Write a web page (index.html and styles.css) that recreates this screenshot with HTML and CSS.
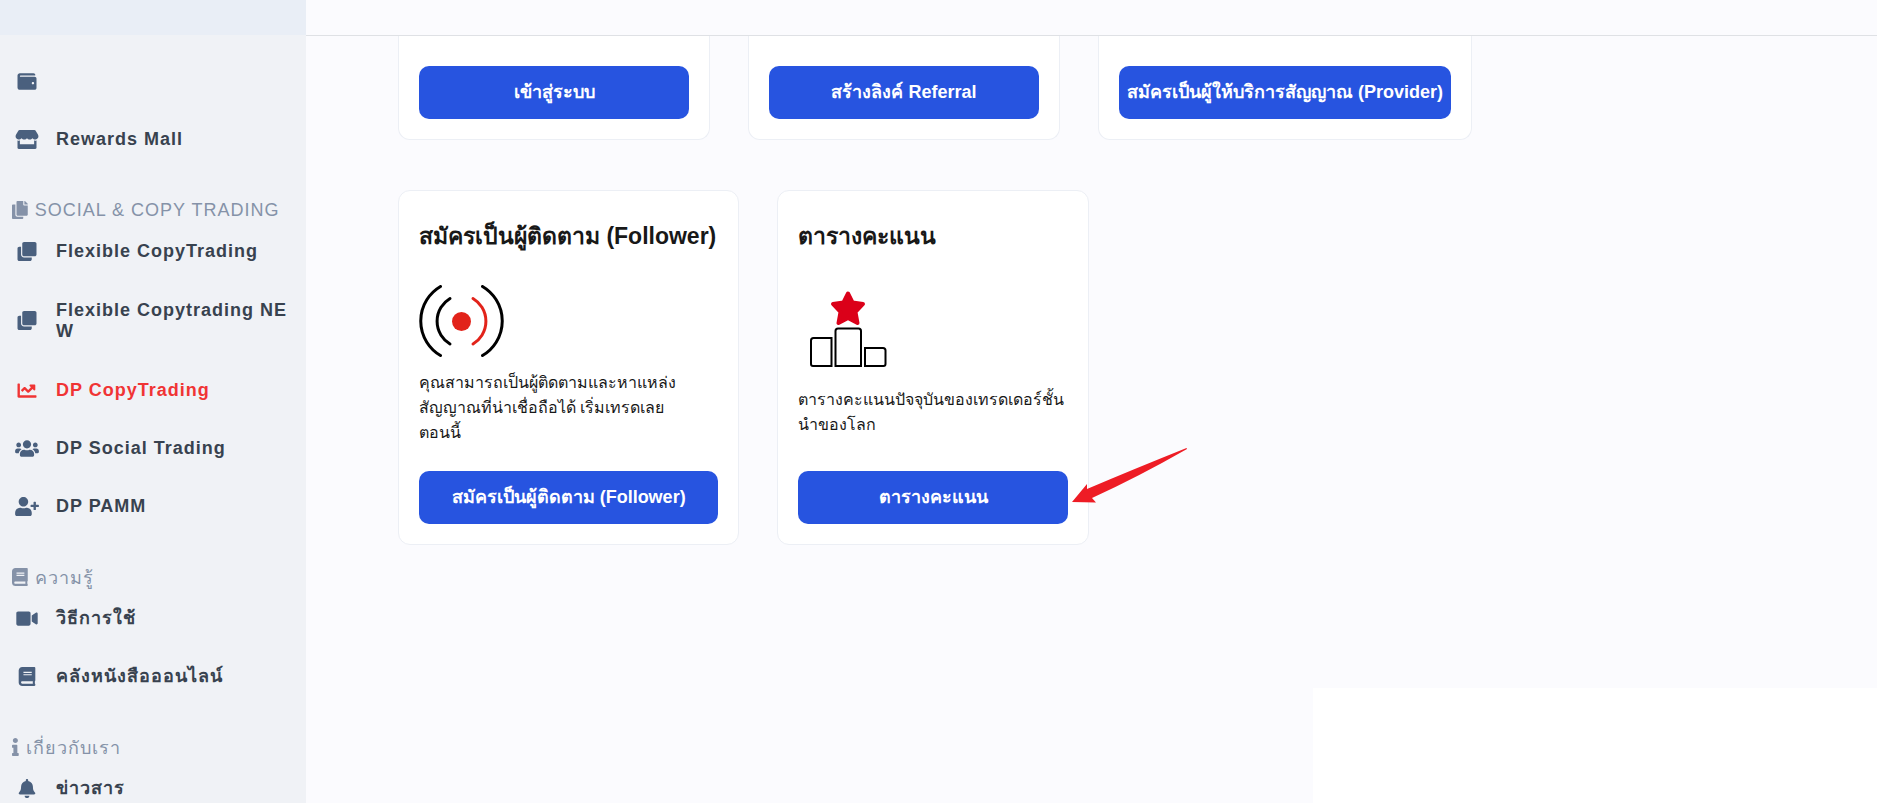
FILE: index.html
```html
<!DOCTYPE html>
<html lang="th">
<head>
    <meta charset="UTF-8">
    <meta name="viewport" content="width=device-width, initial-scale=1.0">
    <title>DP CopyTrading</title>
    <link rel="stylesheet" href="styles.css">
</head>
<body>
    <div class="app">
        <aside class="sidebar">
            <div class="sidebar-brand"></div>
            <nav class="nav">
                <a class="nav-item" href="#" aria-label="Wallet">
                    <svg class="icon" viewBox="0 0 512 512"><path d="M461.2 128H80c-8.84 0-16-7.16-16-16s7.16-16 16-16h384c8.84 0 16-7.16 16-16 0-26.51-21.49-48-48-48H64C28.65 32 0 60.65 0 96v320c0 35.35 28.65 64 64 64h397.2c28.02 0 50.8-21.53 50.8-48V176c0-26.47-22.78-48-50.8-48zM416 336c-17.67 0-32-14.33-32-32s14.33-32 32-32 32 14.33 32 32-14.33 32-32 32z"/></svg>
                </a>
                <a class="nav-item" href="#">
                    <svg class="icon" viewBox="0 0 616 512"><path d="M602 118.6L537.1 15C531.3 5.7 521 0 510 0H106C95 0 84.7 5.7 78.9 15L14 118.6c-33.5 53.5-3.8 127.9 58.8 136.4 4.5.6 9.1.9 13.7.9 29.6 0 55.8-13 73.8-33.1 18 20.1 44.3 33.1 73.8 33.1 29.6 0 55.8-13 73.8-33.1 18 20.1 44.3 33.1 73.8 33.1 29.6 0 55.8-13 73.8-33.1 18.1 20.1 44.3 33.1 73.8 33.1 4.7 0 9.2-.3 13.7-.9 62.8-8.4 92.6-82.8 59-136.4zM529.5 288c-10 0-19.9-1.5-29.5-3.8V384H116v-99.8c-9.6 2.2-19.5 3.8-29.5 3.8-6 0-12.1-.4-18-1.2-5.6-.8-11.1-2.1-16.4-3.6V480c0 17.7 14.3 32 32 32h448c17.7 0 32-14.3 32-32V283.2c-5.4 1.6-10.8 2.9-16.4 3.6-6.1.8-12.1 1.2-18.2 1.2z"/></svg>
                    <span>Rewards Mall</span>
                </a>

                <h2 class="nav-title">
                    <svg class="icon" viewBox="0 0 448 512"><path d="M320 448v40c0 13.255-10.745 24-24 24H24c-13.255 0-24-10.745-24-24V120c0-13.255 10.745-24 24-24h72v296c0 30.879 25.121 56 56 56h168zm0-344V0H152c-13.255 0-24 10.745-24 24v368c0 13.255 10.745 24 24 24h272c13.255 0 24-10.745 24-24V128H344c-13.2 0-24-10.8-24-24zm120.971-31.029L375.029 7.029A24 24 0 0 0 358.059 0H352v96h96v-6.059a24 24 0 0 0-7.029-16.97z"/></svg>
                    SOCIAL &amp; COPY TRADING
                </h2>
                <a class="nav-item" href="#">
                    <svg class="icon" viewBox="0 0 512 512"><path d="M464 0c26.51 0 48 21.49 48 48v288c0 26.51-21.49 48-48 48H176c-26.51 0-48-21.49-48-48V48c0-26.51 21.49-48 48-48h288M176 416c-44.112 0-80-35.888-80-80V128H48c-26.51 0-48 21.49-48 48v288c0 26.51 21.49 48 48 48h288c26.51 0 48-21.49 48-48v-48H176z"/></svg>
                    <span>Flexible CopyTrading</span>
                </a>
                <a class="nav-item nav-item-tall" href="#">
                    <svg class="icon" viewBox="0 0 512 512"><path d="M464 0c26.51 0 48 21.49 48 48v288c0 26.51-21.49 48-48 48H176c-26.51 0-48-21.49-48-48V48c0-26.51 21.49-48 48-48h288M176 416c-44.112 0-80-35.888-80-80V128H48c-26.51 0-48 21.49-48 48v288c0 26.51 21.49 48 48 48h288c26.51 0 48-21.49 48-48v-48H176z"/></svg>
                    <span>Flexible Copytrading NEW</span>
                </a>
                <a class="nav-item active" href="#">
                    <svg class="icon" viewBox="0 0 512 512"><path d="M496 384H64V80c0-8.84-7.16-16-16-16H16C7.16 64 0 71.16 0 80v336c0 17.67 14.33 32 32 32h464c8.84 0 16-7.16 16-16v-32c0-8.84-7.16-16-16-16zM464 96H345.94c-21.38 0-32.09 25.85-16.97 40.97l32.4 32.4L288 242.75l-73.37-73.37c-12.5-12.5-32.76-12.5-45.25 0l-68.69 68.69c-6.25 6.25-6.25 16.38 0 22.63l22.62 22.62c6.25 6.25 16.38 6.25 22.63 0L192 237.25l73.37 73.37c12.5 12.5 32.76 12.5 45.25 0l96-96 32.4 32.4c15.12 15.12 40.97 4.41 40.97-16.97V112c.01-8.84-7.15-16-15.99-16z"/></svg>
                    <span>DP CopyTrading</span>
                </a>
                <a class="nav-item" href="#">
                    <svg class="icon" viewBox="0 0 640 512"><path d="M96 224c35.3 0 64-28.7 64-64s-28.7-64-64-64-64 28.7-64 64 28.7 64 64 64zm448 0c35.3 0 64-28.7 64-64s-28.7-64-64-64-64 28.7-64 64 28.7 64 64 64zm32 32h-64c-17.6 0-33.5 7.1-45.1 18.6 40.3 22.1 68.9 62 75.1 109.4h66c17.7 0 32-14.3 32-32v-32c0-35.3-28.7-64-64-64zm-256 0c61.9 0 112-50.1 112-112S381.9 32 320 32 208 82.1 208 144s50.1 112 112 112zm76.8 32h-8.3c-20.8 10-43.9 16-68.5 16s-47.6-6-68.5-16h-8.3C179.6 288 128 339.6 128 403.2V432c0 26.5 21.5 48 48 48h288c26.5 0 48-21.5 48-48v-28.8c0-63.6-51.6-115.2-115.2-115.2zm-223.7-13.4C161.5 263.1 145.6 256 128 256H64c-35.3 0-64 28.7-64 64v32c0 17.7 14.3 32 32 32h65.9c6.3-47.4 34.9-87.3 75.2-109.4z"/></svg>
                    <span>DP Social Trading</span>
                </a>
                <a class="nav-item" href="#">
                    <svg class="icon" viewBox="0 0 640 512"><path d="M624 208h-64v-64c0-8.8-7.2-16-16-16h-32c-8.8 0-16 7.2-16 16v64h-64c-8.8 0-16 7.2-16 16v32c0 8.8 7.2 16 16 16h64v64c0 8.8 7.2 16 16 16h32c8.8 0 16-7.2 16-16v-64h64c8.8 0 16-7.2 16-16v-32c0-8.8-7.2-16-16-16zm-400 48c70.7 0 128-57.3 128-128S294.7 0 224 0 96 57.3 96 128s57.3 128 128 128zm89.6 32h-16.7c-22.2 10.2-46.9 16-72.9 16s-50.6-5.8-72.9-16h-16.7C60.2 288 0 348.2 0 422.4V464c0 26.5 21.5 48 48 48h352c26.5 0 48-21.5 48-48v-41.6c0-74.2-60.2-134.4-134.4-134.4z"/></svg>
                    <span>DP PAMM</span>
                </a>

                <h2 class="nav-title">
                    <svg class="icon" viewBox="0 0 448 512"><path d="M448 360V24c0-13.3-10.7-24-24-24H96C43 0 0 43 0 96v320c0 53 43 96 96 96h328c13.3 0 24-10.7 24-24v-16c0-7.5-3.5-14.3-8.9-18.7-4.2-15.4-4.2-59.3 0-74.7 5.4-4.3 8.9-11.1 8.9-18.6zM128 134c0-3.3 2.7-6 6-6h212c3.3 0 6 2.7 6 6v20c0 3.3-2.7 6-6 6H134c-3.3 0-6-2.7-6-6v-20zm0 64c0-3.3 2.7-6 6-6h212c3.3 0 6 2.7 6 6v20c0 3.3-2.7 6-6 6H134c-3.3 0-6-2.7-6-6v-20zm253.4 250H96c-17.7 0-32-14.3-32-32 0-17.6 14.4-32 32-32h285.4c-1.9 17.1-1.9 46.9 0 64z"/></svg>
                    ความรู้
                </h2>
                <a class="nav-item" href="#">
                    <svg class="icon" viewBox="0 0 576 512"><path d="M336.2 64H47.8C21.4 64 0 85.4 0 111.8v288.4C0 426.6 21.4 448 47.8 448h288.4c26.4 0 47.8-21.4 47.8-47.8V111.8c0-26.4-21.4-47.8-47.8-47.8zm189.4 37.7L416 177.3v157.4l109.6 75.5c21.2 14.6 50.4-.3 50.4-25.8V127.5c0-25.4-29.1-40.4-50.4-25.8z"/></svg>
                    <span>วิธีการใช้</span>
                </a>
                <a class="nav-item" href="#">
                    <svg class="icon" viewBox="0 0 448 512"><path d="M448 360V24c0-13.3-10.7-24-24-24H96C43 0 0 43 0 96v320c0 53 43 96 96 96h328c13.3 0 24-10.7 24-24v-16c0-7.5-3.5-14.3-8.9-18.7-4.2-15.4-4.2-59.3 0-74.7 5.4-4.3 8.9-11.1 8.9-18.6zM128 134c0-3.3 2.7-6 6-6h212c3.3 0 6 2.7 6 6v20c0 3.3-2.7 6-6 6H134c-3.3 0-6-2.7-6-6v-20zm0 64c0-3.3 2.7-6 6-6h212c3.3 0 6 2.7 6 6v20c0 3.3-2.7 6-6 6H134c-3.3 0-6-2.7-6-6v-20zm253.4 250H96c-17.7 0-32-14.3-32-32 0-17.6 14.4-32 32-32h285.4c-1.9 17.1-1.9 46.9 0 64z"/></svg>
                    <span>คลังหนังสือออนไลน์</span>
                </a>

                <h2 class="nav-title">
                    <svg class="icon" viewBox="0 0 192 512"><path d="M20 424.229h20V279.771H20c-11.046 0-20-8.954-20-20V212c0-11.046 8.954-20 20-20h112c11.046 0 20 8.954 20 20v212.229h20c11.046 0 20 8.954 20 20V492c0 11.046-8.954 20-20 20H20c-11.046 0-20-8.954-20-20v-47.771c0-11.046 8.954-20 20-20zM96 0C56.235 0 24 32.235 24 72s32.235 72 72 72 72-32.235 72-72S135.764 0 96 0z"/></svg>
                    เกี่ยวกับเรา
                </h2>
                <a class="nav-item" href="#">
                    <svg class="icon" viewBox="0 0 448 512"><path d="M224 512c35.32 0 63.97-28.65 63.97-64H160.03c0 35.35 28.65 64 63.97 64zm215.39-149.71c-19.32-20.76-55.47-51.99-55.47-154.29 0-77.7-54.48-139.9-127.94-155.16V32c0-17.67-14.32-32-31.98-32s-31.98 14.33-31.98 32v20.84C118.56 68.1 64.08 130.3 64.08 208c0 102.3-36.15 133.53-55.47 154.29-6 6.45-8.66 14.16-8.61 21.71.11 16.4 12.98 32 32.1 32h383.8c19.12 0 32-15.6 32.1-32 .05-7.55-2.61-15.27-8.61-21.71z"/></svg>
                    <span>ข่าวสาร</span>
                </a>
            </nav>
        </aside>

        <div class="page">
            <header class="topbar"></header>

            <main class="content">
                <!-- First row is scrolled under the top bar -->
                <div class="cards cards-scrolled">
                    <section class="card">
                        <button class="btn" type="button">เข้าสู่ระบบ</button>
                    </section>
                    <section class="card">
                        <button class="btn" type="button">สร้างลิงค์ Referral</button>
                    </section>
                    <section class="card">
                        <button class="btn" type="button">สมัครเป็นผู้ให้บริการสัญญาณ (Provider)</button>
                    </section>
                </div>

                <div class="cards">
                    <section class="card">
                        <h3>สมัครเป็นผู้ติดตาม (Follower)</h3>
                        <svg class="art-signal" viewBox="0 0 85 72" fill="none" stroke="#000" stroke-width="3" stroke-linecap="round">
                            <path d="M21.5 1.5A40 40 0 0 0 21.5 70.5"/>
                            <path d="M63.5 1.5A40 40 0 0 1 63.5 70.5"/>
                            <path d="M31 13.5A26.5 26.5 0 0 0 31 59"/>
                            <path d="M54 13.5A26.5 26.5 0 0 1 54 59" stroke="#e2231a"/>
                            <circle cx="42.5" cy="36.5" r="9.5" fill="#e2231a" stroke="none"/>
                        </svg>
                        <p>คุณสามารถเป็นผู้ติดตามและหาแหล่ง<br>สัญญาณที่น่าเชื่อถือได้ เริ่มเทรดเลย<br>ตอนนี้</p>
                        <button class="btn" type="button">สมัครเป็นผู้ติดตาม (Follower)</button>
                    </section>
                    <section class="card">
                        <h3>ตารางคะแนน</h3>
                        <svg class="art-podium" viewBox="0 0 100 89" fill="none" stroke="#000" stroke-width="2">
                            <path d="M50 8.500L54.500 17.500L65 19L57.500 27L59.500 38L50 33L40.500 38L42.500 27L35 19L45.500 17.500Z" fill="#db0019" stroke="#db0019" stroke-width="4" stroke-linejoin="round"/>
                            <path d="M33.500 53H15.500Q13 53 13 55.500V79Q13 81 15 81H33.500Z"/>
                            <path d="M37.500 81V46Q37.500 43.500 40 43.500H60.500Q63 43.500 63 46V81Z"/>
                            <path d="M67 63H85Q87.500 63 87.500 65.500V79Q87.500 81 85.500 81H67Z"/>
                        </svg>
                        <p>ตารางคะแนนปัจจุบันของเทรดเดอร์ชั้น<br>นำของโลก</p>
                        <button class="btn" type="button">ตารางคะแนน</button>
                        <svg class="pointer" viewBox="0 0 116 55"><path d="M0 54L15 36V41Q62 21 114.500 0L115 1Q66 29 20 50L24 54.500Z" fill="#ee1c25"/></svg>
                    </section>
                </div>
            </main>
        </div>

        <div class="chat-panel"></div>
    </div>
</body>
</html>
```
FILE: styles.css
```css
:root {
    --blue: #2754e0;
    --red: #f03434;
    --nav-text: #38424f;
    --nav-icon: #4a607e;
    --nav-title: #8592a8;
    --nav-bg: #f0f2f6;
    --page-bg: #fbfbfe;
    --card-border: #eceff5;
}

* {
    box-sizing: border-box;
}

body {
    margin: 0;
    font-family: "Liberation Sans", Arial, sans-serif;
    background-color: var(--page-bg);
    color: #181818;
}

.app {
    position: relative;
    display: flex;
    height: 100vh;
    overflow: hidden;
}

/* Sidebar */
.sidebar {
    flex: 0 0 306px;
    background-color: var(--nav-bg);
}

.sidebar-brand {
    height: 35px;
    background-color: #e9eef6;
}

.nav {
    padding-top: 17px;
}

.nav-item {
    display: flex;
    align-items: center;
    gap: 17px;
    min-height: 58px;
    padding: 0 14px 0 15px;
    color: var(--nav-text);
    font-size: 18px;
    font-weight: 700;
    line-height: 21px;
    letter-spacing: 1px;
    text-decoration: none;
    word-break: break-all;
}

.nav-item-tall {
    min-height: 81px;
}

.nav-item .icon {
    flex: 0 0 24px;
    height: 19px;
    fill: var(--nav-icon);
}

.nav-item.active,
.nav-item.active .icon {
    color: var(--red);
    fill: var(--red);
}

.nav-title {
    display: flex;
    align-items: center;
    gap: 7px;
    height: 54px;
    margin: 0;
    padding: 30px 0 0 12px;
    color: var(--nav-title);
    font-size: 18px;
    font-weight: 400;
    letter-spacing: 1px;
}

.nav-title .icon {
    height: 18px;
    fill: var(--nav-title);
}

/* Page */
.page {
    flex: 1;
    min-width: 0;
}

.topbar {
    height: 36px;
    border-bottom: 1px solid #dfe1e5;
}

.content {
    padding: 0 92px;
}

.cards {
    display: flex;
    gap: 38px;
    margin-bottom: 50px;
}

.card {
    position: relative;
    display: flex;
    flex-direction: column;
    min-width: 312px;
    padding: 30px 20px 20px;
    background-color: #fff;
    border: 1px solid var(--card-border);
    border-radius: 12px;
}

.cards-scrolled .card {
    border-top: 0;
    border-radius: 0 0 12px 12px;
}

.card h3 {
    margin: 0 0 34px;
    padding-right: 2px;
    font-size: 23px;
    line-height: 30px;
    white-space: nowrap;
}

.card p {
    margin: 13px 0 26px;
    font-size: 16px;
    line-height: 25px;
    white-space: nowrap;
}

.btn {
    height: 53px;
    margin-top: auto;
    padding: 0 8px 2px;
    border: 0;
    border-radius: 10px;
    background-color: var(--blue);
    color: #fff;
    font-family: inherit;
    font-size: 18px;
    font-weight: 700;
    white-space: nowrap;
    cursor: pointer;
}

.art-signal {
    width: 85px;
    height: 72px;
}

.art-podium {
    width: 100px;
    height: 89px;
}

/* Arrow laid over the card edge */
.pointer {
    position: absolute;
    right: -100px;
    bottom: 41px;
    width: 116px;
    height: 55px;
}

.chat-panel {
    position: absolute;
    right: 0;
    bottom: 0;
    width: 564px;
    height: 115px;
    background-color: #fff;
}
```
